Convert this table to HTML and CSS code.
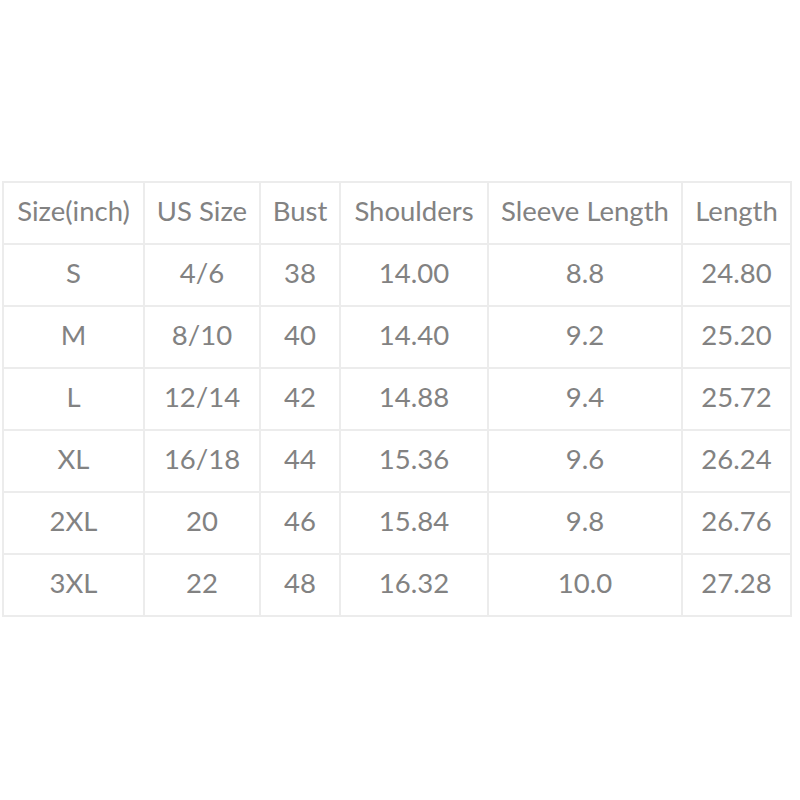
FILE: index.html
```html
<!DOCTYPE html>
<html>
<head>
<meta charset="utf-8">
<link rel="stylesheet" href="styles.css">
</head>
<body>
<div class="page">
<table class="sizes">
<colgroup>
<col class="c1"><col class="c2"><col class="c3"><col class="c4"><col class="c5"><col class="c6">
</colgroup>
<tr class="head"><td>Size(inch)</td><td>US Size</td><td>Bust</td><td>Shoulders</td><td>Sleeve Length</td><td>Length</td></tr>
<tr><td>S</td><td>4/6</td><td>38</td><td>14.00</td><td>8.8</td><td>24.80</td></tr>
<tr><td>M</td><td>8/10</td><td>40</td><td>14.40</td><td>9.2</td><td>25.20</td></tr>
<tr><td>L</td><td>12/14</td><td>42</td><td>14.88</td><td>9.4</td><td>25.72</td></tr>
<tr><td>XL</td><td>16/18</td><td>44</td><td>15.36</td><td>9.6</td><td>26.24</td></tr>
<tr><td>2XL</td><td>20</td><td>46</td><td>15.84</td><td>9.8</td><td>26.76</td></tr>
<tr><td>3XL</td><td>22</td><td>48</td><td>16.32</td><td>10.0</td><td>27.28</td></tr>
</table>
</div>
</body>
</html>
```
FILE: styles.css
```css
html, body {
  margin: 0;
  padding: 0;
  background: #fff;
}
.page {
  padding: 181px 0 0 2px;
}
.sizes {
  border-collapse: collapse;
  table-layout: fixed;
  width: 788px;
  font-family: Lato, "Open Sans", sans-serif;
  font-size: 27.5px;
  color: #828282;
}
.c1 { width: 141px; }
.c2 { width: 116px; }
.c3 { width: 80px; }
.c4 { width: 148px; }
.c5 { width: 194px; }
.c6 { width: 109px; }
.sizes td {
  border: 2px solid #ececec;
  height: 54px;
  padding: 0 0 6px;
  text-align: center;
  vertical-align: middle;
  white-space: nowrap;
}
```
